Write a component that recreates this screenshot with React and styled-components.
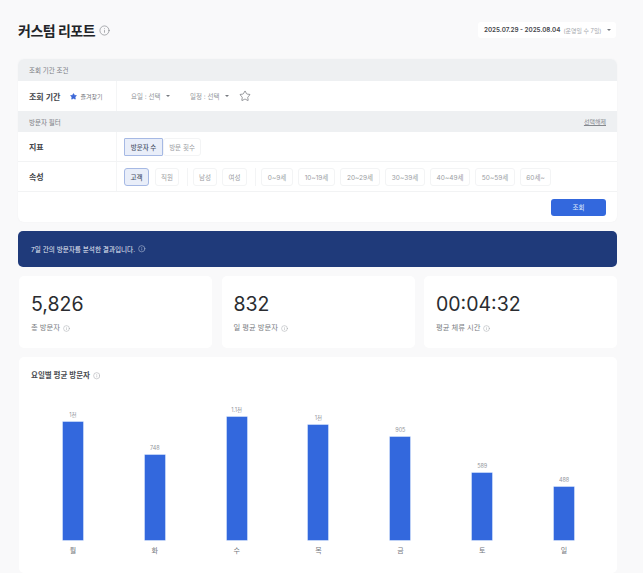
import styled, { createGlobalStyle } from "styled-components";
import { Info, Star } from "lucide-react";

const GlobalStyle = createGlobalStyle`
  html, body {
    margin: 0;
    padding: 0;
    background: #f9f9fa;
    font-family: "Inter", "Noto Sans CJK KR", sans-serif;
    color: #26282c;
  }
  * { box-sizing: border-box; }
`;

const Page = styled.div`
  width: 643px;
  height: 573px;
  overflow: hidden;
  padding: 20px 26px 0 18px;
`;

const Header = styled.div`
  display: flex;
  align-items: center;
  justify-content: space-between;
  height: 20px;
  margin-bottom: 19px;
`;

const Title = styled.h1`
  display: flex;
  align-items: center;
  gap: 4px;
  margin: 0;
  font-size: 14px;
  font-weight: 700;
  letter-spacing: -0.5px;
  color: #222428;
  svg { color: #77797e; }
`;

const DatePicker = styled.div`
  display: flex;
  align-items: center;
  gap: 3px;
  width: 138px;
  height: 16px;
  margin-right: 1px;
  padding-left: 6px;
  background: #fff;
  border-radius: 3px;
  white-space: nowrap;
  strong { font-weight: 600; color: #44464b; font-size: 6.3px; }
  span { color: #a4a7ac; font-size: 5.9px; }
`;

const Caret = styled.i`
  width: 0;
  height: 0;
  margin-left: ${({ $gap }) => $gap || 4}px;
  border-left: 2px solid transparent;
  border-right: 2px solid transparent;
  border-top: 2.5px solid #777a80;
`;

const Panel = styled.section`
  background: #fff;
  border-radius: 6px;
  overflow: hidden;
  height: 163px;
  box-shadow: 0 0 2px rgba(30, 40, 60, 0.04);
`;

const SectionBar = styled.div`
  display: flex;
  align-items: center;
  justify-content: space-between;
  height: ${({ $h }) => $h}px;
  padding: 0 11px;
  background: #eef0f2;
  font-size: 6.5px;
  color: #7b7e84;
`;

const ClearLink = styled.span`
  text-decoration: underline;
  font-size: 6px;
  color: #85888e;
`;

const Row = styled.div`
  display: flex;
  height: 30px;
  border-bottom: ${({ $line }) => ($line ? "1px solid #f2f3f4" : "none")};
`;

const RowLabel = styled.div`
  display: flex;
  align-items: center;
  gap: 10px;
  width: 99px;
  padding-left: 11px;
  border-right: 1px solid #f4f5f6;
  font-size: 8px;
  font-weight: 600;
  color: #44464b;
`;

const Favorite = styled.span`
  display: flex;
  align-items: center;
  gap: 3px;
  font-size: 6px;
  font-weight: 400;
  color: #74777d;
  svg { color: #3d68d8; fill: #3d68d8; }
`;

const RowBody = styled.div`
  display: flex;
  align-items: center;
  flex: 1;
  padding-left: 7px;
`;

const Select = styled.div`
  display: flex;
  align-items: center;
  justify-content: space-between;
  width: 53px;
  height: 18px;
  margin-right: 6px;
  padding: 0 7px;
  background: #fff;
  font-size: 6.5px;
  color: #94979c;
`;

const StarButton = styled.span`
  display: flex;
  margin-left: -3px;
  color: #55585e;
`;

const Segments = styled.div`
  display: flex;
`;

const Chip = styled.button`
  display: flex;
  align-items: center;
  justify-content: center;
  width: ${({ $w }) => $w}px;
  height: 18px;
  margin-right: ${({ $mr }) => ($mr === undefined ? 5 : $mr)}px;
  padding: 0;
  border: 1px solid ${({ $on }) => ($on ? "#a6b9e4" : "#f3f4f5")};
  border-radius: ${({ $square }) => ($square ? 1 : 3)}px;
  background: ${({ $on }) => ($on ? "#e9eef9" : "#fff")};
  font-family: inherit;
  font-size: 6.5px;
  font-weight: ${({ $on }) => ($on ? 500 : 400)};
  color: ${({ $on }) => ($on ? "#4a5368" : "#9a9da2")};
`;

const ChipDivider = styled.i`
  width: 1px;
  height: 18px;
  margin: 0 5.5px 0 2.5px;
  background: #f3f4f5;
`;

const ActionRow = styled.div`
  display: flex;
  justify-content: flex-end;
  align-items: center;
  height: 30px;
  padding-right: 11px;
`;

const SearchButton = styled.button`
  width: 55px;
  height: 17px;
  border: 0;
  border-radius: 3px;
  background: #3368dd;
  color: #dfe8fb;
  font-family: inherit;
  font-size: 6.5px;
`;

const Banner = styled.div`
  display: flex;
  align-items: center;
  gap: 3px;
  height: 36px;
  margin-top: 9px;
  padding-left: 13px;
  background: #1f3a7a;
  border-radius: 5px;
  font-size: 6.6px;
  color: #e8ecf6;
  svg { color: #d5dcec; }
`;

const Stats = styled.div`
  display: grid;
  grid-template-columns: repeat(3, 193px);
  gap: 9.5px;
  margin: 9px 0 9px 1px;
`;

const StatCard = styled.div`
  height: 72px;
  padding: 15px 12px 0;
  background: #fff;
  border-radius: 5px;
`;

const StatValue = styled.div`
  font-size: 19.5px;
  font-weight: 400;
  line-height: 27px;
  color: #2a2c30;
`;

const StatLabel = styled.div`
  display: flex;
  align-items: center;
  gap: 3px;
  margin-top: 4px;
  font-size: 7.3px;
  line-height: 12px;
  color: #797c82;
  svg { color: #93969c; }
`;

const ChartCard = styled.section`
  height: 216px;
  margin-left: 1px;
  padding: 12px 12px 0 13px;
  background: #fff;
  border-radius: 5px;
`;

const ChartTitle = styled.div`
  display: flex;
  align-items: center;
  gap: 3px;
  margin-left: -1px;
  font-size: 7.5px;
  font-weight: 600;
  line-height: 14px;
  color: #4a4c51;
  svg { color: #93969c; }
`;

const Plot = styled.div`
  display: grid;
  grid-template-columns: repeat(7, 1fr);
  height: 143px;
  margin-top: 14px;
`;

const Column = styled.div`
  display: flex;
  flex-direction: column;
  align-items: center;
  justify-content: flex-end;
`;

const BarValue = styled.span`
  margin-bottom: 3px;
  font-size: 5.5px;
  line-height: 7px;
  color: #94979c;
`;

const Bar = styled.div`
  width: 20px;
  height: ${({ $h }) => $h}px;
  background: #3368dd;
  box-shadow: 0 0 0 0.5px #7fa3ee;
`;

const DayRow = styled.div`
  display: grid;
  grid-template-columns: repeat(7, 1fr);
  margin-top: 6px;
`;

const DayLabel = styled.span`
  text-align: center;
  font-size: 7px;
  line-height: 10px;
  color: #74777d;
`;

const ages = [
  ["0~9세", 32],
  ["10~19세", 37],
  ["20~29세", 40],
  ["30~39세", 40],
  ["40~49세", 40],
  ["50~59세", 40],
  ["60세~", 31],
];

const days = [
  { day: "월", value: "1천", height: 118 },
  { day: "화", value: "748", height: 85.5 },
  { day: "수", value: "1.1천", height: 123.5 },
  { day: "목", value: "1천", height: 115 },
  { day: "금", value: "905", height: 103.5 },
  { day: "토", value: "589", height: 67.5 },
  { day: "일", value: "488", height: 53.5 },
];

const stats = [
  { value: "5,826", label: "총 방문자" },
  { value: "832", label: "일 평균 방문자" },
  { value: "00:04:32", label: "평균 체류 시간" },
];

function App() {
  return (
    <Page>
      <GlobalStyle />
      <Header>
        <Title>
          커스텀 리포트 <Info size={11} strokeWidth={1.3} />
        </Title>
        <DatePicker>
          <strong>2025.07.29 - 2025.08.04</strong>
          <span>(운영일 수 7일)</span>
          <Caret $gap={2} />
        </DatePicker>
      </Header>

      <Panel>
        <SectionBar $h={22}>조회 기간 조건</SectionBar>
        <Row>
          <RowLabel>
            조회 기간
            <Favorite>
              <Star size={7} />
              즐겨찾기
            </Favorite>
          </RowLabel>
          <RowBody>
            <Select>
              요일 : 선택 <Caret />
            </Select>
            <Select>
              일정 : 선택 <Caret />
            </Select>
            <StarButton>
              <Star size={12} strokeWidth={1.2} />
            </StarButton>
          </RowBody>
        </Row>
        <SectionBar $h={21}>
          방문자 필터
          <ClearLink>선택해제</ClearLink>
        </SectionBar>
        <Row $line>
          <RowLabel>지표</RowLabel>
          <RowBody>
            <Segments>
              <Chip $on $square $w={39} $mr={0}>
                방문자 수
              </Chip>
              <Chip $w={38} $mr={0}>
                방문 횟수
              </Chip>
            </Segments>
          </RowBody>
        </Row>
        <Row $line>
          <RowLabel>속성</RowLabel>
          <RowBody>
            <Chip $on $w={25} $mr={6}>
              고객
            </Chip>
            <Chip $w={24}>직원</Chip>
            <ChipDivider />
            <Chip $w={24}>남성</Chip>
            <Chip $w={25}>여성</Chip>
            <ChipDivider />
            {ages.map(([label, width]) => (
              <Chip key={label} $w={width}>
                {label}
              </Chip>
            ))}
          </RowBody>
        </Row>
        <ActionRow>
          <SearchButton>조회</SearchButton>
        </ActionRow>
      </Panel>

      <Banner>
        7일 간의 방문자를 분석한 결과입니다. <Info size={7.5} strokeWidth={1.5} />
      </Banner>

      <Stats>
        {stats.map((stat) => (
          <StatCard key={stat.label}>
            <StatValue>{stat.value}</StatValue>
            <StatLabel>
              {stat.label} <Info size={7} strokeWidth={1.4} />
            </StatLabel>
          </StatCard>
        ))}
      </Stats>

      <ChartCard>
        <ChartTitle>
          요일별 평균 방문자 <Info size={7.5} strokeWidth={1.4} />
        </ChartTitle>
        <Plot>
          {days.map((item) => (
            <Column key={item.day}>
              <BarValue>{item.value}</BarValue>
              <Bar $h={item.height} />
            </Column>
          ))}
        </Plot>
        <DayRow>
          {days.map((item) => (
            <DayLabel key={item.day}>{item.day}</DayLabel>
          ))}
        </DayRow>
      </ChartCard>
    </Page>
  );
}

export default App;
